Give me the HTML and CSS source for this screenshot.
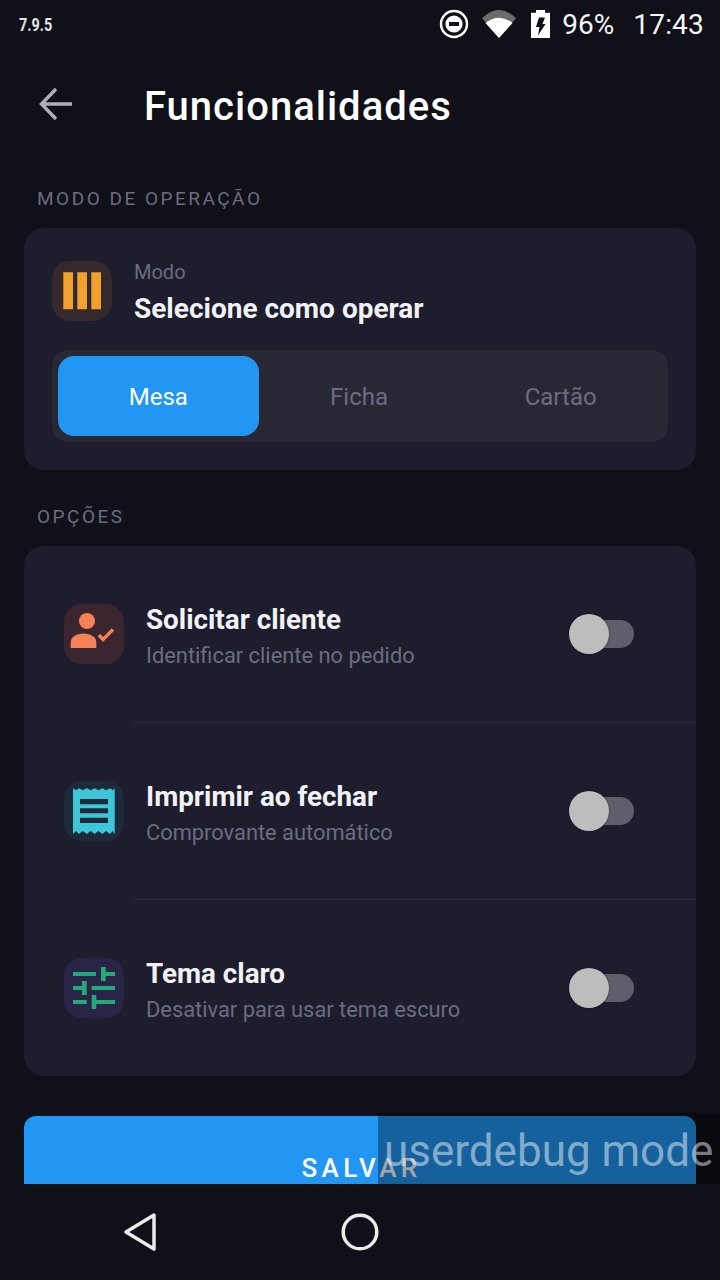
FILE: index.html
```html
<!DOCTYPE html>
<html lang="pt">
<head>
<meta charset="utf-8">
<title>Funcionalidades</title>
<link rel="stylesheet" href="styles.css">
</head>
<body>
<div class="phone">
  <div class="status">
    <span class="version">7.9.5</span>
    <div class="status-right">
      <svg class="ico-dnd" width="30" height="30" viewBox="0 0 30 30"><circle cx="15" cy="15" r="13" fill="none" stroke="#fff" stroke-width="2.4"/><circle cx="15" cy="15" r="8.6" fill="#fff"/><rect x="10" y="13" width="10" height="4" fill="#0f1018"/></svg>
      <svg class="ico-wifi" width="34" height="28" viewBox="0 0 34 28"><path d="M0 8.300Q17-8.300 34 8.300L17 28Z" fill="#6c6c70"/><path d="M3.500 13Q17 2.400 30.500 13L17 28Z" fill="#fff"/></svg>
      <svg class="ico-batt" width="19" height="28.400" viewBox="0 0 19 28.400"><path d="M5 0h9v2.700h5V28.400H0V2.700h5Z" fill="#fff"/><path d="M8 7.500h6l-2.500 6.500h3L7 25.500l1.500-8.500H5Z" fill="#0f1018"/></svg>
      <span class="pct">96%</span>
      <span class="clock">17:43</span>
    </div>
  </div>

  <main class="content">
    <header class="topbar">
      <svg class="back" width="36" height="36" viewBox="0 0 36 36"><path d="M34 18H4M18 3 3.500 18 18 33" fill="none" stroke="#b0b0b4" stroke-width="3.400"/></svg>
      <h1 class="title">Funcionalidades</h1>
    </header>

    <h2 class="section-label">MODO DE OPERAÇÃO</h2>
    <section class="card mode-card">
      <div class="mode-head">
        <div class="tile tile-orange">
          <svg width="60" height="60" viewBox="0 0 60 60"><path d="M11.300 11.300h9.700v37H11.300ZM25.300 11.300h9.700v37H25.300ZM39.300 11.300h9.700v37H39.300Z" fill="#f2a02e"/></svg>
        </div>
        <div class="mode-text">
          <div class="mode-small">Modo</div>
          <div class="mode-big">Selecione como operar</div>
        </div>
      </div>
      <div class="segmented">
        <div class="seg seg-on">Mesa</div>
        <div class="seg seg-off">Ficha</div>
        <div class="seg seg-off">Cartão</div>
      </div>
    </section>

    <h2 class="section-label">OPÇÕES</h2>
    <section class="card options-card">
      <div class="row">
        <div class="tile tile-red">
          <svg width="60" height="60" viewBox="0 0 60 60"><circle cx="23" cy="17" r="8" fill="#f58154"/><path d="M6.700 44V38C6.700 33 13 29.500 19.500 29.500S32.300 33 32.300 38V44Z" fill="#f58154"/><path d="M35 31 39 35.500 49 25.500" fill="none" stroke="#f58154" stroke-width="3.400"/></svg>
        </div>
        <div class="row-text">
          <div class="row-title">Solicitar cliente</div>
          <div class="row-sub">Identificar cliente no pedido</div>
        </div>
        <div class="switch"><span class="knob"></span></div>
      </div>
      <div class="divider"></div>
      <div class="row">
        <div class="tile tile-cyan">
          <svg width="60" height="60" viewBox="0 0 60 60"><path d="M9 7.300 12 9.300 15 7.300 18.700 9.300 22.700 7.300 26.700 9.300 30.700 7.300 34.300 9.300 38.300 7.300 42 9.300 46 7.300 48.700 9.300 50.700 7.300V53L48.700 50 46 53 42 50 38.300 53 34.300 50 30.700 53 26.700 50 22.700 53 18.700 50 15 53 12 50 9 53Z" fill="#3cc6d8"/><path d="M16 18h28v5.300H16ZM16 27.300h28v5H16ZM16 36.700h28v5.300H16Z" fill="#1a2b3c"/></svg>
        </div>
        <div class="row-text">
          <div class="row-title">Imprimir ao fechar</div>
          <div class="row-sub">Comprovante automático</div>
        </div>
        <div class="switch"><span class="knob"></span></div>
      </div>
      <div class="divider"></div>
      <div class="row">
        <div class="tile tile-green">
          <svg width="60" height="60" viewBox="0 0 60 60"><path d="M9 14h23v4H9ZM37 9h4.700v5H51v4h-9.300v5H37ZM9 28h9v-5h4.700v14H18v-5H9ZM27.700 28H51v4H27.700ZM9 42h13.700v4H9ZM27.700 37h4.600v5H51v4H32.300v5h-4.600Z" fill="#22a87a"/></svg>
        </div>
        <div class="row-text">
          <div class="row-title">Tema claro</div>
          <div class="row-sub">Desativar para usar tema escuro</div>
        </div>
        <div class="switch"><span class="knob"></span></div>
      </div>
    </section>

    <button class="save">SALVAR</button>
  </main>

  <nav class="navbar">
    <svg class="nav-back" width="36" height="40" viewBox="0 0 36 40"><path d="M32 3 4 20 32 37Z" fill="none" stroke="#ebebeb" stroke-width="3.500" stroke-linejoin="round"/></svg>
    <svg class="nav-home" width="38" height="38" viewBox="0 0 38 38"><circle cx="19" cy="19" r="16.800" fill="none" stroke="#ebebeb" stroke-width="3.500"/></svg>
  </nav>

  <div class="debug">userdebug mode</div>
</div>
</body>
</html>
```

FILE: styles.css
```css
* { box-sizing: border-box; }
html, body { margin: 0; padding: 0; }
body { background: #0f1018; font-family: Roboto, "Noto Sans", sans-serif; color: #f2f2f6; }
.phone { position: relative; width: 720px; height: 1280px; display: flex; flex-direction: column; overflow: hidden; background: #0f1018; }

.status { height: 52px; flex: none; display: flex; align-items: center; justify-content: space-between; padding: 0 16px 4px 19px; }
.version { font-size: 19px; font-weight: 700; color: #e4e4e4; display: inline-block; transform: scaleX(.76); transform-origin: left center; }
.status-right { display: flex; align-items: center; color: #f5f5f5; font-size: 28px; }
.ico-dnd { margin-right: 13px; }
.ico-wifi { margin-right: 15px; }
.ico-batt { margin-right: 12px; }
.clock { margin-left: 19px; letter-spacing: .2px; }

.content { flex: 1; min-height: 0; overflow: hidden; padding: 0 24px; }
.topbar { display: flex; align-items: center; height: 108px; padding-left: 14px; }
.back { flex: none; margin: -4px 70px 0 0; }
.title { margin: 0; font-size: 40px; font-weight: 500; letter-spacing: 1px; color: #fff; }

.section-label { margin: 0 0 17px 13px; height: 23px; line-height: 21px; font-size: 19px; font-weight: 400; letter-spacing: 2.500px; color: #6c6c80; }
.topbar + .section-label { margin-top: 28px; }

.card { background: #1d1d2e; border-radius: 20px; }
.mode-card { padding: 33px 28px 28px; height: 242px; margin-bottom: 36px; }
.mode-head { display: flex; gap: 22px; height: 60px; }
.tile { width: 60px; height: 60px; flex: none; border-radius: 18px; }
.tile svg { display: block; }
.tile-orange { background: #34292d; }
.tile-red { background: #3b262f; }
.tile-cyan { background: #1b2b3c; }
.tile-green { background: #292547; }
.mode-small { font-size: 20px; line-height: 24px; color: #6c6c80; margin-top: -1px; }
.mode-big { font-size: 28px; line-height: 34px; font-weight: 700; color: #f2f2f6; margin-top: 8px; }

.segmented { display: flex; margin-top: 29px; height: 92px; padding: 6px; border-radius: 16px; background: #282835; }
.seg { flex: 1; display: flex; align-items: center; justify-content: center; font-size: 24px; border-radius: 16px; padding-top: 2px; }
.seg-off { color: #6c6c80; padding-right: 1px; }
.seg-on { background: #2196f3; color: #fff; }

.options-card { height: 530px; margin-bottom: 40px; }
.row { display: flex; align-items: center; height: 176px; padding: 0 62px 0 40px; }
.row-text { flex: 1; margin-left: 22px; padding-top: 6px; }
.row-title { font-size: 27.800px; line-height: 34px; font-weight: 700; color: #f2f2f6; }
.row-sub { font-size: 21.850px; line-height: 30px; color: #6c6c80; margin-top: 4px; }
.divider { height: 1px; margin-left: 110px; background: #2b2b3b; }

.switch { position: relative; width: 60px; height: 28px; border-radius: 14px; background: #5f5f6b; }
.knob { position: absolute; left: -5px; top: -6px; width: 40px; height: 40px; border-radius: 50%; background: #bdbdbd; box-shadow: 0 0 2px rgba(0,0,0,.5); }

.save { display: block; width: 100%; height: 104px; border: 0; border-radius: 12px; padding: 0 0 0 3px; background: #2196f3; color: #fff; font: 500 26px Roboto, sans-serif; letter-spacing: 4.300px; }

.navbar { height: 96px; flex: none; background: #0f1018; position: relative; display: flex; align-items: center; padding-left: 122px; }
.nav-back { margin-right: 183px; }

.debug { position: absolute; left: 378px; top: 1113px; width: 342px; height: 71px; background: rgba(0,0,0,.35); color: rgba(255,255,255,.48); font-size: 44px; line-height: 76px; padding-left: 6px; white-space: nowrap; overflow: hidden; }
```
